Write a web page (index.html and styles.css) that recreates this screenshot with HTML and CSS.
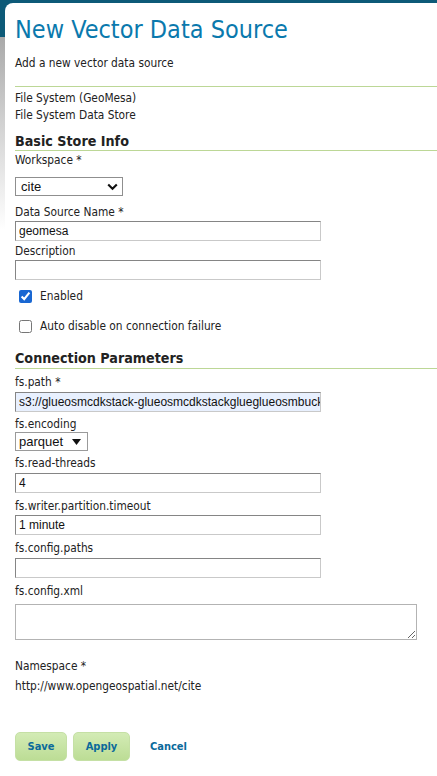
FILE: index.html
```html
<!DOCTYPE html>
<html>
<head>
<meta charset="utf-8">
<link rel="stylesheet" href="styles.css">
</head>
<body>
<div class="panel">
  <h1 class="title">New Vector Data Source</h1>
  <p class="subtitle">Add a new vector data source</p>
  <div class="store-type">
    <div>File System (GeoMesa)</div>
    <div>File System Data Store</div>
  </div>

  <h2 class="section">Basic Store Info</h2>
  <div class="field field-ws">
    <label class="lbl">Workspace *</label>
    <div class="select-wrap">
      <select class="sel sel-ws"><option>cite</option></select>
      <svg class="chev" width="11" height="8" viewBox="0 0 11 8"><path d="M1.2 1.5 L5.5 5.8 L9.8 1.5" fill="none" stroke="#111" stroke-width="2.1"/></svg>
    </div>
  </div>
  <div class="field field-basic field-after-select">
    <label class="lbl">Data Source Name *</label>
    <input class="txt" type="text" value="geomesa">
  </div>
  <div class="field field-basic">
    <label class="lbl">Description</label>
    <input class="txt" type="text" value="">
  </div>
  <div class="check-row check-first">
    <input type="checkbox" class="cb" checked>
    <span>Enabled</span>
  </div>
  <div class="check-row check-second">
    <input type="checkbox" class="cb">
    <span>Auto disable on connection failure</span>
  </div>

  <h2 class="section section-conn">Connection Parameters</h2>
  <div class="field field-conn field-path">
    <label class="lbl">fs.path *</label>
    <input class="txt txt-auto" type="text" value="s3://glueosmcdkstack-glueosmcdkstackglueglueosmbucket">
  </div>
  <div class="field field-conn field-enc">
    <label class="lbl">fs.encoding</label>
    <div class="select-wrap">
      <select class="sel sel-enc"><option>parquet</option></select>
      <svg class="tri" width="9" height="6" viewBox="0 0 9 6"><path d="M0 0 H9 L4.5 6 Z" fill="#111"/></svg>
    </div>
  </div>
  <div class="field field-conn">
    <label class="lbl">fs.read-threads</label>
    <input class="txt" type="text" value="4">
  </div>
  <div class="field field-conn field-gap5 field-tight">
    <label class="lbl">fs.writer.partition.timeout</label>
    <input class="txt" type="text" value="1 minute">
  </div>
  <div class="field field-conn field-gap5">
    <label class="lbl">fs.config.paths</label>
    <input class="txt" type="text" value="">
  </div>
  <div class="field field-conn field-gap5 field-xml">
    <label class="lbl">fs.config.xml</label>
    <textarea class="area"></textarea>
  </div>

  <div class="ns">
    <div>Namespace *</div>
    <div>http://www.opengeospatial.net/cite</div>
  </div>

  <div class="buttons">
    <button class="btn">Save</button>
    <button class="btn btn-apply">Apply</button>
    <a class="cancel" href="#">Cancel</a>
  </div>
</div>
</body>
</html>
```

FILE: styles.css
```css
html, body {
  margin: 0;
  padding: 0;
}
body {
  width: 437px;
  height: 776px;
  overflow: hidden;
  background:
    linear-gradient(to bottom, #0d5a78 0px, #0d5a78 37px, #a9a9a9 37px, #d0d0d0 120px, #ffffff 230px);
  font-family: "DejaVu Sans Condensed", "DejaVu Sans", sans-serif;
  font-size: 11.8px;
  color: #222;
}
.panel {
  margin: 3px 0 0 5px;
  background: #fff;
  border-top-left-radius: 8px;
  padding: 12px 0 0 10px;
  height: 762px;
  box-sizing: border-box;
}
.title {
  margin: 0;
  font-weight: normal;
  font-size: 25px;
  line-height: 30px;
  color: #0a79ad;
}
.subtitle {
  margin: 10px 0 0 0;
  line-height: 16px;
  padding-bottom: 15px;
  border-bottom: 1px solid #bcd796;
}
.store-type {
  margin-top: 3px;
  line-height: 17px;
}
.section {
  margin: 9px 0 0 0;
  font-size: 14.2px;
  font-weight: bold;
  line-height: 17px;
  padding-bottom: 0;
  border-bottom: 1px solid #bcd796;
  color: #222;
}
.section-conn {
  margin-top: 16px;
  padding-bottom: 1px;
}
.field {
  display: flex;
  flex-direction: column;
  align-items: flex-start;
}
.lbl {
  display: block;
  line-height: 16px;
}
.field-ws {
  margin-top: 1px;
}
.field-ws .select-wrap {
  margin-top: 9px;
}
.field-basic {
  margin-top: 2px;
}
.field-basic .txt {
  margin-top: 1px;
}
.field-after-select {
  margin-top: 8px;
}
.field-conn {
  margin-top: 4px;
}
.field-conn .txt {
  margin-top: 2px;
}
.field-path {
  margin-top: 5px;
}
.field-gap5 {
  margin-top: 5px;
}
.field-tight .txt {
  margin-top: 1px;
}
.field-xml .area {
  margin-top: 5px;
}
.select-wrap {
  position: relative;
  display: inline-block;
  line-height: 0;
}
.sel {
  -webkit-appearance: none;
  appearance: none;
  font-family: "Liberation Sans", Arial, sans-serif;
  font-size: 13px;
  color: #111;
  background: #fff;
  margin: 0;
  box-sizing: border-box;
  border-radius: 0;
}
.sel-ws {
  width: 108px;
  height: 19px;
  border: 1px solid #8f8f8f;
  padding: 0 0 0 5px;
}
.chev {
  position: absolute;
  right: 5px;
  top: 6px;
  pointer-events: none;
}
.sel-enc {
  width: 73px;
  height: 19px;
  border: 1px solid #9a9a9a;
  padding: 0 0 0 3px;
}
.tri {
  position: absolute;
  right: 7px;
  top: 7px;
  pointer-events: none;
}
.txt {
  width: 306px;
  height: 20px;
  box-sizing: border-box;
  margin: 0;
  padding: 0 0 0 3px;
  font-family: "Liberation Sans", Arial, sans-serif;
  font-size: 12px;
  color: #111;
  border: 1px solid;
  border-color: #858585 #c9c9c9 #c9c9c9 #858585;
  background: #fff;
  outline: none;
}
.txt-auto {
  background: #e8f0fe;
}
.check-row {
  display: flex;
  align-items: center;
  gap: 8px;
  margin-left: 4px;
  line-height: 16px;
}
.check-first {
  margin-top: 8px;
}
.check-second {
  margin-top: 14px;
}
.cb {
  margin: 0;
  width: 13px;
  height: 13px;
  accent-color: #1967d2;
}
.area {
  width: 402px;
  height: 36px;
  box-sizing: border-box;
  margin: 0;
  border: 1px solid #b3b3b3;
  resize: both;
  font-family: "Liberation Sans", Arial, sans-serif;
}
.ns {
  margin-top: 16px;
  line-height: 20px;
}
.buttons {
  display: flex;
  align-items: center;
  margin-top: 36px;
}
.btn {
  font-family: "DejaVu Sans Condensed", "DejaVu Sans", sans-serif;
  font-size: 11px;
  font-weight: bold;
  color: #0b6a9b;
  background: linear-gradient(to bottom, #d3ebb5, #bcdd95);
  border: 1px solid #c5e0a5;
  border-radius: 5px;
  height: 29px;
  width: 52px;
  padding: 0;
  margin: 0 6px 0 0;
}
.btn-apply {
  width: 57px;
}
.cancel {
  margin-left: 14px;
  font-weight: bold;
  color: #0b6a9b;
  text-decoration: none;
  font-size: 11px;
}
```
